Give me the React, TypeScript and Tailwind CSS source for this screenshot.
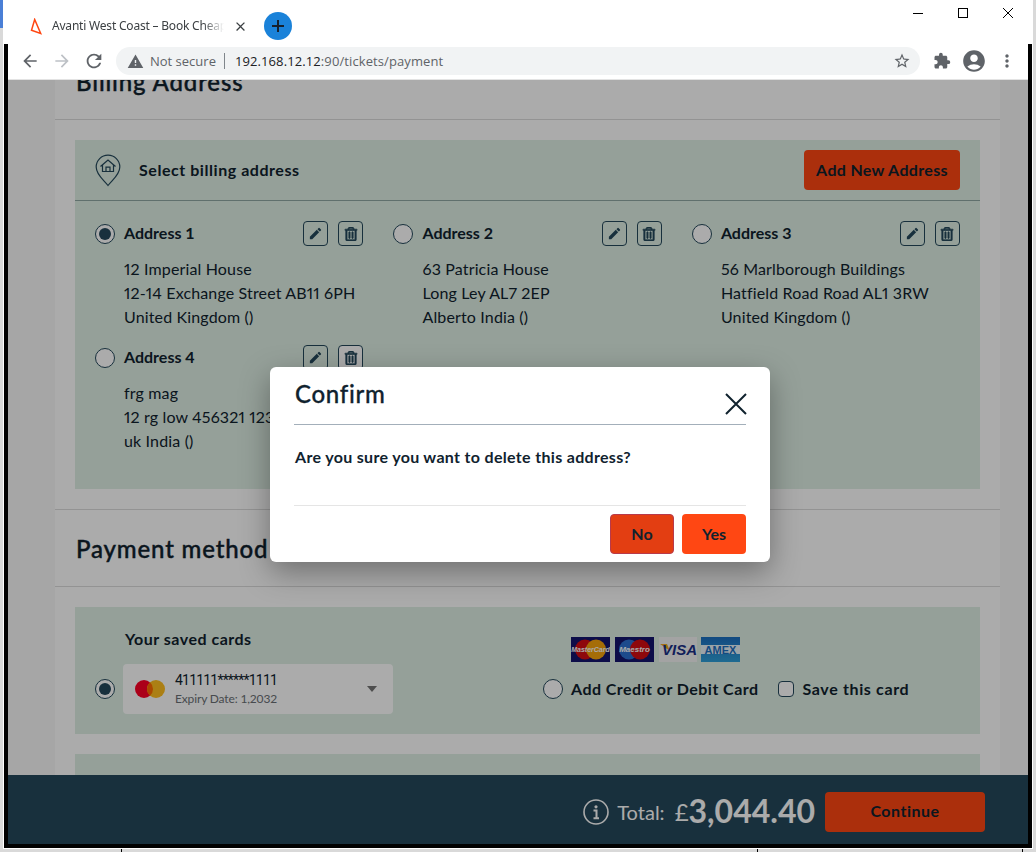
import React from 'react';
import { FaRegTrashAlt } from 'react-icons/fa';
import {
  MdAccountCircle,
  MdArrowBack,
  MdArrowForward,
  MdClose,
  MdEdit,
  MdExtension,
  MdMoreVert,
  MdRefresh,
  MdStarBorder,
  MdWarning,
} from 'react-icons/md';

const addresses = [
  { label: 'Address 1', lines: ['12 Imperial House', '12-14 Exchange Street AB11 6PH', 'United Kingdom ()'], checked: true },
  { label: 'Address 2', lines: ['63 Patricia House', 'Long Ley AL7 2EP', 'Alberto India ()'] },
  { label: 'Address 3', lines: ['56 Marlborough Buildings', 'Hatfield Road Road AL1 3RW', 'United Kingdom ()'] },
  { label: 'Address 4', lines: ['frg mag', '12 rg low 456321 123-456', 'uk India ()'], active: true },
];

const Radio: React.FC<{ checked?: boolean }> = ({ checked }) => (
  <span className="flex h-5 w-5 shrink-0 items-center justify-center rounded-full border border-[#24485b] bg-white">
    {checked && <span className="h-3 w-3 rounded-full bg-[#24485b]" />}
  </span>
);

const IconButton: React.FC<{ active?: boolean; children: React.ReactNode }> = ({ active, children }) => (
  <button
    type="button"
    className={`flex h-[25px] w-[25px] items-center justify-center rounded border border-[#24485b] text-[#24485b] ${active ? 'bg-white' : ''}`}
  >
    {children}
  </button>
);

const AddressCard: React.FC<(typeof addresses)[number]> = ({ label, lines, checked, active }) => (
  <div>
    <div className="flex h-[25px] items-center">
      <Radio checked={checked} />
      <span className="ml-[9px] flex-1 pb-[2px] text-base font-bold">{label}</span>
      <div className="flex gap-[10px]">
        <IconButton>
          <MdEdit size={15} />
        </IconButton>
        <IconButton active={active}>
          <FaRegTrashAlt size={14} stroke="currentColor" strokeWidth={24} />
        </IconButton>
      </div>
    </div>
    <div className="mt-[11px] whitespace-nowrap pl-[29px] text-base leading-6 tracking-[0.15px] [font-variant-numeric:proportional-nums]">
      {lines.map((line) => (
        <div key={line}>{line}</div>
      ))}
    </div>
  </div>
);

const PinHouseIcon = () => (
  <svg width="26" height="33" viewBox="0 0 26 33" fill="none" stroke="#24485b" strokeWidth="1.2">
    <path d="M13 31.5 C9 26 1.2 21 1.2 13 A11.8 11.8 0 0 1 24.8 13 C24.8 21 17 26 13 31.5 Z" />
    <path d="M5.5 12.5 L13 6 L20.5 12.5" strokeWidth="1.3" />
    <path d="M7.5 11 V17.5 H18.5 V11" />
    <path d="M11 17.5 V13.2 H15 V17.5" />
  </svg>
);

const CardLogos = () => (
  <div className="ml-[28px] flex items-center gap-[5px]">
    <svg width="39" height="25" viewBox="0 0 39 25">
      <rect width="39" height="25" fill="#14146e" />
      <circle cx="14" cy="12.5" r="10" fill="#d40c12" />
      <circle cx="25" cy="12.5" r="10" fill="#f7a30d" />
      <text x="19.5" y="15" textAnchor="middle" fontSize="7" fontStyle="italic" fontWeight="700" fill="#fff" fontFamily="Liberation Sans, sans-serif">MasterCard</text>
    </svg>
    <svg width="39" height="25" viewBox="0 0 39 25">
      <rect width="39" height="25" fill="#14146e" />
      <circle cx="14" cy="12.5" r="10" fill="#2c6fd1" />
      <circle cx="25" cy="12.5" r="10" fill="#d40c12" />
      <text x="19.5" y="15" textAnchor="middle" fontSize="8" fontStyle="italic" fontWeight="700" fill="#fff" fontFamily="Liberation Sans, sans-serif">Maestro</text>
    </svg>
    <svg width="38" height="25" viewBox="0 0 38 25">
      <rect width="38" height="25" fill="#f4f4f4" />
      <path d="M1 7 L8 7 L11 14 Z" fill="#f2a81d" />
      <text x="20.5" y="18" textAnchor="middle" fontSize="15" fontStyle="italic" fontWeight="700" fill="#1a2f86" fontFamily="Liberation Sans, sans-serif">VISA</text>
    </svg>
    <svg width="39" height="25" viewBox="0 0 39 25" className="-ml-[1px]">
      <defs>
        <linearGradient id="amexBlue" x1="0" y1="0" x2="0" y2="1">
          <stop offset="0" stopColor="#1c6fc0" />
          <stop offset="1" stopColor="#2f9fd8" />
        </linearGradient>
      </defs>
      <rect width="39" height="25" fill="url(#amexBlue)" />
      <rect y="8" width="39" height="9" fill="#e8f3fa" />
      <text x="19.5" y="16.5" textAnchor="middle" fontSize="11" fontWeight="700" fill="#1c6fc0" fontFamily="Liberation Sans, sans-serif">AMEX</text>
    </svg>
  </div>
);

const InfoIcon = () => (
  <svg width="26" height="26" viewBox="0 0 26 26" fill="none" stroke="#fff" strokeWidth="1.6">
    <circle cx="13" cy="13" r="12" />
    <circle cx="13" cy="7.8" r="1.6" fill="#fff" stroke="none" />
    <path d="M10.5 11.5 H13.5 V19 M10.5 19.2 H16" strokeWidth="2" />
  </svg>
);

export default function App() {
  return (
    <div className="flex h-[852px] w-[1036px] flex-col overflow-hidden bg-[#d9d9d9] font-['Lato',sans-serif] text-[#10222e]">
      <div className="flex h-[849px]">
        {/* desktop edge */}
        <div className="w-[3px] shrink-0">
          <div className="h-[28px] bg-[#4a7fd6]" />
        </div>

        {/* browser window */}
        <div className="flex w-[1030px] shrink-0 flex-col bg-white pb-px font-['Open_Sans',sans-serif]">
          {/* tab strip */}
          <div className="flex h-[44px] shrink-0 items-center pt-2">
            <svg width="14" height="18" viewBox="0 0 14 18" fill="none" className="ml-[27px] mt-[1px]" stroke="#ff4713" strokeWidth="1.5">
              <path d="M4.7 1.5 L1.5 12.3 L10.7 15.5 Z" />
            </svg>
            <div className="ml-[8px] w-[172px] overflow-hidden whitespace-nowrap text-xs leading-none tracking-[-0.2px] text-[#3c4043] [mask-image:linear-gradient(to_right,black_88%,transparent)] [font-family:'Noto_Sans',sans-serif]">
              Avanti West Coast – Book Cheap Train Tickets
            </div>
            <MdClose size={15} className="ml-[9px] text-[#3c4043]" />
            <div className="ml-[16px] flex h-7 w-7 items-center justify-center rounded-full bg-[#1a82d9]">
              <svg width="14" height="14" viewBox="0 0 14 14" stroke="#16202c" strokeWidth="2">
                <path d="M7 1 V13 M1 7 H13" />
              </svg>
            </div>
            <div className="-mt-px ml-[620px] flex items-center self-start">
              <svg width="12" height="12" viewBox="0 0 12 12" stroke="#000" strokeWidth="1" fill="none">
                <path d="M1 6.5 H11" />
              </svg>
              <svg width="12" height="12" viewBox="0 0 12 12" stroke="#000" strokeWidth="1" fill="none" className="ml-[33px]">
                <rect x="1.5" y="1.5" width="9" height="9" />
              </svg>
              <svg width="12" height="12" viewBox="0 0 12 12" stroke="#000" strokeWidth="1" fill="none" className="ml-[33px]">
                <path d="M1 1 L11 11 M11 1 L1 11" />
              </svg>
            </div>
          </div>

          <div className="mx-px flex min-h-0 flex-1 flex-col border-x-4 border-b-4 border-black">
            {/* toolbar */}
            <div className="flex h-[36px] shrink-0 items-center border-b border-[#e3e3e3] pb-[1px]">
              <MdArrowBack size={20} className="ml-[12px] text-[#5f6368]" />
              <MdArrowForward size={20} className="ml-[12px] text-[#bdc1c6]" />
              <MdRefresh size={22} className="ml-[11px] text-[#5f6368]" />
              <div className="ml-[11px] flex h-[28px] w-[804px] items-center rounded-full bg-[#f1f3f4] pl-[11px] text-sm">
                <MdWarning size={17} className="text-[#5f6368]" />
                <span className="ml-[6px] text-[13px] text-[#5f6368]">Not secure</span>
                <span className="ml-[8px] h-4 w-px bg-[#80868b]" />
                <span className="ml-[10px] text-[13px] tracking-[0.1px] text-[#202124]">
                  192.168.12.12<span className="text-[#5f6368]">:90/tickets/payment</span>
                </span>
                <MdStarBorder size={18} className="ml-auto mr-[9px] text-[#5f6368]" />
              </div>
              <MdExtension size={18} className="ml-[13px] text-[#5f6368]" />
              <MdAccountCircle size={26} className="ml-[10px] text-[#5f6368]" />
              <MdMoreVert size={20} className="ml-[10px] text-[#5f6368]" />
            </div>

            {/* page */}
            <div className="relative flex min-h-0 flex-1 flex-col font-['Lato',sans-serif]">
              <main className="min-h-0 flex-1 overflow-hidden bg-[#f8f8f8]">
                <div className="ml-[47px] w-[945px] bg-white">
                  <section className="-mt-[16px]">
                    <h2 className="flex h-[56px] items-center border-b border-[#dcdcdc] pb-[20px] pl-[21px] text-2xl font-medium tracking-[0.85px] [-webkit-text-stroke:0.4px_#10222e]">Billing Address</h2>
                    <div className="px-5 py-5">
                      <div className="bg-[#deefe4]">
                        <div className="flex h-[61px] items-center border-b border-[#8fa7a3] px-5">
                          <PinHouseIcon />
                          <span className="ml-[18px] text-base font-bold tracking-[0.55px]">Select billing address</span>
                          <button type="button" className="ml-auto h-10 w-[156px] rounded bg-[#ff4713] text-base font-bold tracking-[0.33px]">
                            Add New Address
                          </button>
                        </div>
                        <div className="grid grid-cols-3 gap-x-[30.4px] gap-y-4 px-5 pb-9 pt-5">
                          {addresses.map((address) => (
                            <AddressCard key={address.label} {...address} />
                          ))}
                        </div>
                      </div>
                    </div>
                  </section>

                  <section className="border-t border-[#dcdcdc]">
                    <h2 className="flex h-[77px] items-center border-b border-[#dcdcdc] pl-[21px] pt-[2px] text-2xl font-medium tracking-[0.85px] [-webkit-text-stroke:0.4px_#10222e]">Payment method</h2>
                    <div className="flex flex-col gap-5 px-5 py-5">
                      <div className="flex h-[127px] bg-[#deefe4] pl-5">
                        <div className="w-[298px] pt-[23px]">
                          <div className="pl-[30px] text-base font-bold leading-[18px] tracking-[0.5px]">Your saved cards</div>
                          <div className="mt-[16px] flex items-center">
                            <Radio checked />
                            <div className="ml-2 flex h-[50px] w-[270px] items-center rounded bg-white pl-3 pr-4">
                              <svg width="30" height="20" viewBox="0 0 30 20">
                                <circle cx="9" cy="10" r="9" fill="#ff0026" />
                                <circle cx="21" cy="10" r="9" fill="#ffbe1e" />
                                <path d="M15 3.3 A9 9 0 0 1 15 16.7 A9 9 0 0 1 15 3.3 Z" fill="#ff6a00" />
                              </svg>
                              <div className="ml-[10px] flex-1">
                                <div className="font-['Roboto',sans-serif] text-[14px] leading-[18px] tracking-[-0.8px]">411111******1111</div>
                                <div className="mt-[2px] text-xs leading-[16px] tracking-[-0.15px] text-[#6b7075]">Expiry Date: 1,2032</div>
                              </div>
                              <span className="h-0 w-0 border-x-[5.5px] border-t-[6px] border-x-transparent border-t-[#757575]" />
                            </div>
                          </div>
                        </div>
                        <div className="ml-[150px] flex flex-col pt-[30px]">
                          <CardLogos />
                          <div className="mt-[15px] flex items-center">
                            <Radio />
                            <span className="ml-2 text-base font-bold tracking-[0.45px]">Add Credit or Debit Card</span>
                            <span className="ml-5 h-4 w-4 rounded-sm border border-[#24485b] bg-white" />
                            <span className="ml-2 text-base font-bold tracking-[0.64px]">Save this card</span>
                          </div>
                        </div>
                      </div>
                      <div className="h-[120px] bg-[#deefe4]" />
                    </div>
                  </section>
                </div>
              </main>

              <footer className="flex h-[69px] shrink-0 items-center justify-end bg-[#24485b] pr-[43px] pt-[5px] text-white">
                <InfoIcon />
                <span className="ml-2 text-xl">Total:</span>
                <span className="ml-[10px] text-2xl">£</span>
                <span className="mb-[2px] text-[32px] font-bold leading-none">3,044.40</span>
                <button type="button" className="ml-[10px] h-10 w-40 rounded bg-[#ff4713] pb-[2px] text-base font-bold tracking-[0.5px] text-[#10222e]">
                  Continue
                </button>
              </footer>

              {/* modal backdrop */}
              <div className="absolute inset-0 bg-black/[0.33]" />

              <div className="absolute left-[262px] top-[287px] h-[195px] w-[500px] rounded-md bg-white px-6 shadow-[0_10px_30px_rgba(0,0,0,0.35)]">
                <div className="flex h-[58px] items-start justify-between border-b border-[#a3afba]">
                  <h3 className="ml-px mt-[11px] text-2xl font-medium leading-8 tracking-[0.7px] [-webkit-text-stroke:0.3px_#10222e]">Confirm</h3>
                  <svg width="22" height="22" viewBox="0 0 22 22" stroke="#10222e" strokeWidth="2" className="-mr-px mt-[26px]">
                    <path d="M1 1 L21 21 M21 1 L1 21" />
                  </svg>
                </div>
                <p className="ml-px mt-[20px] text-base font-bold leading-6 tracking-[0.32px]">Are you sure you want to delete this address?</p>
                <div className="mt-[36px] flex justify-end gap-2 border-t border-[#e5e5e5] pt-2">
                  <button type="button" className="h-10 w-16 rounded border border-[#b83a4b] bg-[#e33e12] text-base font-bold">
                    No
                  </button>
                  <button type="button" className="h-10 w-16 rounded bg-[#ff4713] text-base font-bold">
                    Yes
                  </button>
                </div>
              </div>
            </div>
          </div>
        </div>

        <div className="flex-1" />
      </div>

      {/* desktop edge below the window */}
      <div className="flex h-[3px]">
        <span className="ml-[121px] w-px bg-black" />
        <span className="ml-[635px] w-px bg-black" />
        <span className="ml-[264px] w-px bg-black" />
      </div>
    </div>
  );
}
